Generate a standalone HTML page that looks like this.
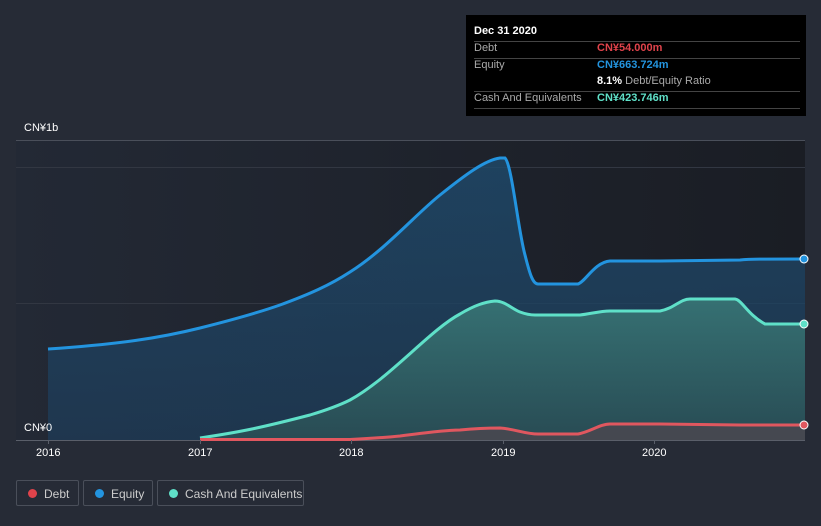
<!DOCTYPE html>
<html><head><meta charset="utf-8"><style>
html,body{margin:0;padding:0;width:821px;height:526px;background:#262b36;overflow:hidden;font-family:"Liberation Sans","Noto Sans CJK SC",sans-serif}
.tt{position:absolute;left:466px;top:15px;width:340px;height:101px;background:#000;color:#fff;font-size:11px}
.tt .r{position:absolute;left:8px;right:6px;border-bottom:1px solid #444}
.lbl{color:#aaa}
.leg{position:absolute;top:480px;height:26px;border:1px solid #4a4f5a;border-radius:2px;color:#ccc;font-size:12px;line-height:26px;box-sizing:border-box}
.leg i{position:absolute;left:11px;top:8px;width:9px;height:9px;border-radius:50%}
.leg span{position:absolute;left:27px}
.ax{position:absolute;color:#fff;font-size:11px}
</style></head><body>
<svg width="821" height="526" style="position:absolute;left:0;top:0">
<defs>
<linearGradient id="bg" x1="0" x2="1"><stop offset="0" stop-color="#232935"/><stop offset="1" stop-color="#1a1d24"/></linearGradient>
<linearGradient id="eq" x1="0" y1="0" x2="0" y2="1"><stop offset="0" stop-color="#1f4a6c" stop-opacity=".8"/><stop offset="1" stop-color="#1e3a55" stop-opacity=".8"/></linearGradient>
<linearGradient id="ca" x1="0" y1="0" x2="0" y2="1"><stop offset="0" stop-color="#3a7a78" stop-opacity=".85"/><stop offset="1" stop-color="#2a4f55" stop-opacity=".85"/></linearGradient>
</defs>
<rect x="16" y="140" width="789" height="300" fill="url(#bg)"/>
<line x1="16" y1="140.5" x2="805" y2="140.5" stroke="#4a4f5a"/>
<line x1="16" y1="167.5" x2="805" y2="167.5" stroke="#323742"/>
<line x1="16" y1="303.5" x2="805" y2="303.5" stroke="#323742"/>
<path d="M48,349 C120,344 160,338 200,328 C240,318 260,312 280,305 C310,294 330,285 350,272 C385,250 415,215 440,195 C465,175 485,160 500,158 L505,158 C512,165 518,230 525,255 C530,275 533,284 538,284 L578,284 C585,282 595,262 610,261 L660,261 L740,260 C750,259 760,259 805,259 L805,440 L48,440 Z" fill="url(#eq)"/>
<path d="M200,438 C240,432 260,428 310,415 C330,409 340,405 350,400 C390,378 430,330 460,314 C475,305 485,302 495,301 C505,301 512,309 520,312 C528,315 532,315 535,315 L580,315 C590,314 600,311 610,311 L660,311 C675,308 680,299 690,299 L735,299 C742,300 748,315 765,324 L805,324 L805,440 L200,440 Z" fill="url(#ca)"/>
<path d="M200,440 L350,440 C380,438 390,437 400,436 C430,432 450,430 460,430 C480,428 495,428 500,428 C515,429 525,434 538,434 L578,434 C590,432 600,424 610,424 L660,424 L740,425 L805,425 L805,440 Z" fill="#4a4850" opacity=".85"/>
<line x1="16" y1="440.5" x2="805" y2="440.5" stroke="#5a5f6a"/>
<path d="M48,349 C120,344 160,338 200,328 C240,318 260,312 280,305 C310,294 330,285 350,272 C385,250 415,215 440,195 C465,175 485,160 500,158 L505,158 C512,165 518,230 525,255 C530,275 533,284 538,284 L578,284 C585,282 595,262 610,261 L660,261 L740,260 C750,259 760,259 805,259" fill="none" stroke="#2394df" stroke-width="3"/>
<path d="M200,438 C240,432 260,428 310,415 C330,409 340,405 350,400 C390,378 430,330 460,314 C475,305 485,302 495,301 C505,301 512,309 520,312 C528,315 532,315 535,315 L580,315 C590,314 600,311 610,311 L660,311 C675,308 680,299 690,299 L735,299 C742,300 748,315 765,324 L805,324" fill="none" stroke="#5fe0c8" stroke-width="3"/>
<path d="M200,439.5 L350,439.5 C380,438 390,437 400,436 C430,432 450,430 460,430 C480,428 495,428 500,428 C515,429 525,434 538,434 L578,434 C590,432 600,424 610,424 L660,424 L740,425 L805,425" fill="none" stroke="#e0575f" stroke-width="3"/>
<circle cx="804" cy="259" r="4" fill="#2394df" stroke="#fff" stroke-width="1"/>
<circle cx="804" cy="324" r="4" fill="#5fe0c8" stroke="#fff" stroke-width="1"/>
<circle cx="804" cy="425" r="4" fill="#e0575f" stroke="#fff" stroke-width="1"/>
<g stroke="#5a5f6a"><line x1="48.5" y1="440" x2="48.5" y2="444"/><line x1="200.5" y1="440" x2="200.5" y2="444"/><line x1="351.5" y1="440" x2="351.5" y2="444"/><line x1="503.5" y1="440" x2="503.5" y2="444"/><line x1="654.5" y1="440" x2="654.5" y2="444"/></g>
</svg>
<div class="ax" style="left:24px;top:122px">CN¥1b</div>
<div class="ax" style="left:24px;top:422px">CN¥0</div>
<div class="ax" style="left:36px;top:447px">2016</div>
<div class="ax" style="left:188px;top:447px">2017</div>
<div class="ax" style="left:339px;top:447px">2018</div>
<div class="ax" style="left:491px;top:447px">2019</div>
<div class="ax" style="left:642px;top:447px">2020</div>
<div class="tt">
<div style="position:absolute;left:8px;top:10px;font-weight:bold">Dec 31 2020</div>
<div class="r" style="top:26px"></div>
<div class="lbl" style="position:absolute;left:8px;top:27px">Debt</div>
<div style="position:absolute;left:131px;top:27px;color:#e0434b;font-weight:bold">CN¥54.000m</div>
<div class="r" style="top:43px"></div>
<div class="lbl" style="position:absolute;left:8px;top:44px">Equity</div>
<div style="position:absolute;left:131px;top:44px;color:#2394df;font-weight:bold">CN¥663.724m</div>
<div style="position:absolute;left:131px;top:60px"><b>8.1%</b> <span class="lbl">Debt/Equity Ratio</span></div>
<div class="r" style="top:76px"></div>
<div class="lbl" style="position:absolute;left:8px;top:77px">Cash And Equivalents</div>
<div style="position:absolute;left:131px;top:77px;color:#5fe0c8;font-weight:bold">CN¥423.746m</div>
<div class="r" style="top:93px"></div>
</div>
<div class="leg" style="left:16px;width:63px"><i style="background:#e0434b"></i><span>Debt</span></div>
<div class="leg" style="left:83px;width:70px"><i style="background:#2394df"></i><span>Equity</span></div>
<div class="leg" style="left:157px;width:147px"><i style="background:#5fe0c8"></i><span>Cash And Equivalents</span></div>
</body></html>
